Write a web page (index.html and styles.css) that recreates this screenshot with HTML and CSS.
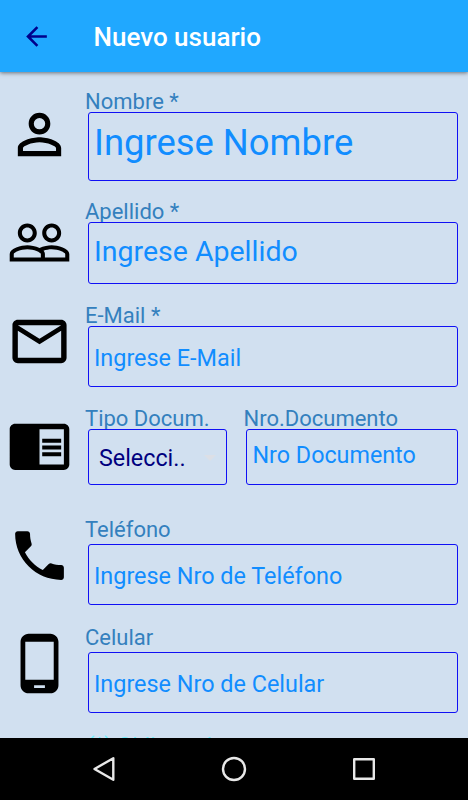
FILE: index.html
```
<!DOCTYPE html>
<html lang="es">
<head>
<meta charset="UTF-8" />
<meta name="viewport" content="width=device-width, initial-scale=1" />
<title>Nuevo usuario</title>
<link rel="stylesheet" href="styles.css">
</head>
<body>

<header class="toolbar">
  <svg class="back" viewBox="0 0 24 24"><path d="M20 11H7.83l5.59-5.59L12 4l-8 8 8 8 1.41-1.41L7.83 13H20v-2z"/></svg>
  <h1>Nuevo usuario</h1>
</header>

<main class="form">
  <div class="row row-nombre">
    <svg class="icon" viewBox="0 0 24 24"><path d="M12 5.9a2.1 2.1 0 1 1 0 4.2 2.1 2.1 0 0 1 0-4.2m0 9c2.97 0 6.1 1.46 6.1 2.1v1.1H5.9V17c0-.64 3.13-2.1 6.1-2.1M12 4C9.79 4 8 5.79 8 8s1.79 4 4 4 4-1.79 4-4-1.79-4-4-4zm0 9c-2.67 0-8 1.34-8 4v3h16v-3c0-2.66-5.33-4-8-4z"/></svg>
    <div class="field">
      <label>Nombre *</label>
      <div class="input"><span>Ingrese Nombre</span></div>
    </div>
  </div>

  <div class="row row-apellido">
    <svg class="icon" viewBox="0 0 24 24"><path d="M16.5 13c-1.2 0-3.07.34-4.5 1-1.43-.67-3.3-1-4.5-1C5.33 13 1 14.08 1 16.25V19h22v-2.75c0-2.17-4.33-3.25-6.5-3.25zm-4 4.5h-10v-1.25c0-.54 2.56-1.75 5-1.75s5 1.21 5 1.75v1.25zm9 0H14v-1.25c0-.46-.2-.86-.52-1.22.88-.3 1.96-.53 3.02-.53 2.44 0 5 1.21 5 1.75v1.25zM7.5 12c1.93 0 3.5-1.57 3.5-3.5S9.43 5 7.5 5 4 6.57 4 8.5 5.57 12 7.5 12zm0-5.5c1.1 0 2 .9 2 2s-.9 2-2 2-2-.9-2-2 .9-2 2-2zm9 5.5c1.93 0 3.5-1.57 3.5-3.5S18.43 5 16.5 5 13 6.57 13 8.5s1.57 3.5 3.5 3.5zm0-5.5c1.1 0 2 .9 2 2s-.9 2-2 2-2-.9-2-2 .9-2 2-2z"/></svg>
    <div class="field">
      <label>Apellido *</label>
      <div class="input"><span>Ingrese Apellido</span></div>
    </div>
  </div>

  <div class="row row-mail">
    <svg class="icon" viewBox="0 0 24 24"><path d="M20 4H4c-1.1 0-1.99.9-1.99 2L2 18c0 1.1.9 2 2 2h16c1.1 0 2-.9 2-2V6c0-1.1-.9-2-2-2zm0 14H4V8l8 5 8-5v10zm-8-7L4 6h16l-8 5z"/></svg>
    <div class="field">
      <label>E-Mail *</label>
      <div class="input"><span>Ingrese E-Mail</span></div>
    </div>
  </div>

  <div class="row row-documento">
    <svg class="icon" viewBox="0 0 24 24"><path d="M13 12h7v1.5h-7zm0-2.5h7V11h-7zm0 5h7V16h-7zM21 4H3c-1.1 0-2 .9-2 2v13c0 1.1.9 2 2 2h18c1.1 0 2-.9 2-2V6c0-1.1-.9-2-2-2zm0 15h-9V6h9v13z"/></svg>
    <div class="field field-tipo">
      <label>Tipo Docum.</label>
      <div class="input select"><span>Selecci..</span><i class="caret"></i></div>
    </div>
    <div class="field">
      <label>Nro.Documento</label>
      <div class="input"><span>Nro Documento</span></div>
    </div>
  </div>

  <div class="row row-telefono">
    <svg class="icon" viewBox="0 0 24 24"><path d="M6.62 10.79c1.44 2.83 3.76 5.14 6.59 6.59l2.2-2.2c.27-.27.67-.36 1.02-.24 1.12.37 2.33.57 3.57.57.55 0 1 .45 1 1V20c0 .55-.45 1-1 1-9.39 0-17-7.61-17-17 0-.55.45-1 1-1h3.5c.55 0 1 .45 1 1 0 1.25.2 2.45.57 3.57.11.35.03.74-.25 1.02l-2.2 2.2z"/></svg>
    <div class="field">
      <label>Teléfono</label>
      <div class="input"><span>Ingrese Nro de Teléfono</span></div>
    </div>
  </div>

  <div class="row row-celular">
    <svg class="icon" viewBox="0 0 24 24"><path d="M16 1H8C6.34 1 5 2.34 5 4v16c0 1.66 1.34 3 3 3h8c1.66 0 3-1.34 3-3V4c0-1.66-1.34-3-3-3zm-2 20h-4v-1h4v1zm3.25-3H6.75V4h10.5v14z"/></svg>
    <div class="field">
      <label>Celular</label>
      <div class="input"><span>Ingrese Nro de Celular</span></div>
    </div>
  </div>

  <p class="note">(*) Obligatorio</p>
</main>

<nav class="navbar">
  <svg viewBox="0 0 26 26"><path d="M22.3 2.2v21.6L3.5 13z"/></svg>
  <svg viewBox="0 0 26 26"><circle cx="13" cy="13" r="11"/></svg>
  <svg viewBox="0 0 26 26"><rect x="3.2" y="3.2" width="19.6" height="19.6"/></svg>
</nav>

</body>
</html>
```
FILE: styles.css
```
* {
  box-sizing: border-box;
}
body {
  margin: 0;
  height: 800px;
  display: flex;
  flex-direction: column;
  overflow: hidden;
  background: #d1e0f0;
  font-family: Roboto, sans-serif;
}
.toolbar {
  flex: none;
  height: 72px;
  display: flex;
  align-items: center;
  padding: 2px 0 0 21px;
  background: #20a8ff;
  box-shadow: 0 1px 4px rgba(0, 0, 0, 0.5);
}
.back {
  width: 31px;
  height: 31px;
  margin: 0 41.5px 2px 0;
  fill: #00008b;
}
.toolbar h1 {
  margin: 0;
  font-size: 26px;
  line-height: 32px;
  font-weight: 500;
  color: #fff;
}
.form {
  flex: 1;
  min-height: 0;
  overflow: hidden;
  padding: 18px 10px 0 7px;
}
.row {
  display: flex;
  align-items: flex-start;
}
.icon {
  flex: none;
  width: 65px;
  height: 65px;
  margin-right: 13px;
}
.field {
  flex: 1;
  min-width: 0;
}
.field label {
  display: block;
  height: 22px;
  overflow: hidden;
  font-size: 22px;
  line-height: 23px;
  color: #3480be;
  white-space: nowrap;
}
.input {
  display: flex;
  align-items: center;
  margin-left: 2.5px;
  padding-left: 5.5px;
  border: 1.5px solid #1010f5;
  border-radius: 3px;
  color: #118dff;
  font-size: 23.4px;
  white-space: nowrap;
}

.row-nombre {
  height: 110px;
}
.row-nombre .icon {
  margin-top: 11.5px;
}
.row-nombre .input {
  height: 69px;
  padding-bottom: 8px;
  font-size: 36.4px;
}
.row-apellido {
  height: 104px;
}
.row-apellido .icon {
  margin-top: 9.5px;
}
.row-apellido .input {
  height: 62px;
  padding-bottom: 4px;
  font-size: 28.5px;
}
.row-mail {
  height: 103px;
}
.row-mail .icon {
  margin-top: 5px;
}
.row-mail .input,
.row-telefono .input,
.row-celular .input {
  height: 61px;
  padding-top: 2px;
}
.row-documento {
  height: 109px;
}
.row-documento .icon {
  margin-top: 5.5px;
}
.row-documento .input {
  height: 56px;
  padding-bottom: 4px;
  font-size: 23.3px;
}
.field-tipo {
  flex: 0 0 142px;
  margin-right: 16.5px;
}
.row-documento .select {
  justify-content: space-between;
  padding: 2px 10px 0 10.5px;
  font-size: 23.3px;
  color: #00007f;
}
.caret {
  border: 6px solid transparent;
  border-top-color: #dcdfe6;
  border-bottom: 0;
}
.row-telefono {
  height: 108px;
}
.row-telefono .icon {
  margin-top: 7px;
}
.row-telefono label,
.row-celular label {
  height: 28px;
  line-height: 27px;
}
.row-celular {
  height: 109px;
}
.row-celular .icon {
  margin-top: 6.5px;
}
.note {
  margin: 0 0 0 80px;
  font-size: 22px;
  line-height: 26px;
  color: #6ff0ff;
}

.navbar {
  flex: none;
  height: 62px;
  display: flex;
  align-items: center;
  justify-content: space-between;
  padding: 0 91px;
  background: #000;
}
.navbar svg {
  width: 26px;
  height: 26px;
  fill: none;
  stroke: #e8e8e8;
  stroke-width: 2.4;
  stroke-linejoin: round;
}
```
